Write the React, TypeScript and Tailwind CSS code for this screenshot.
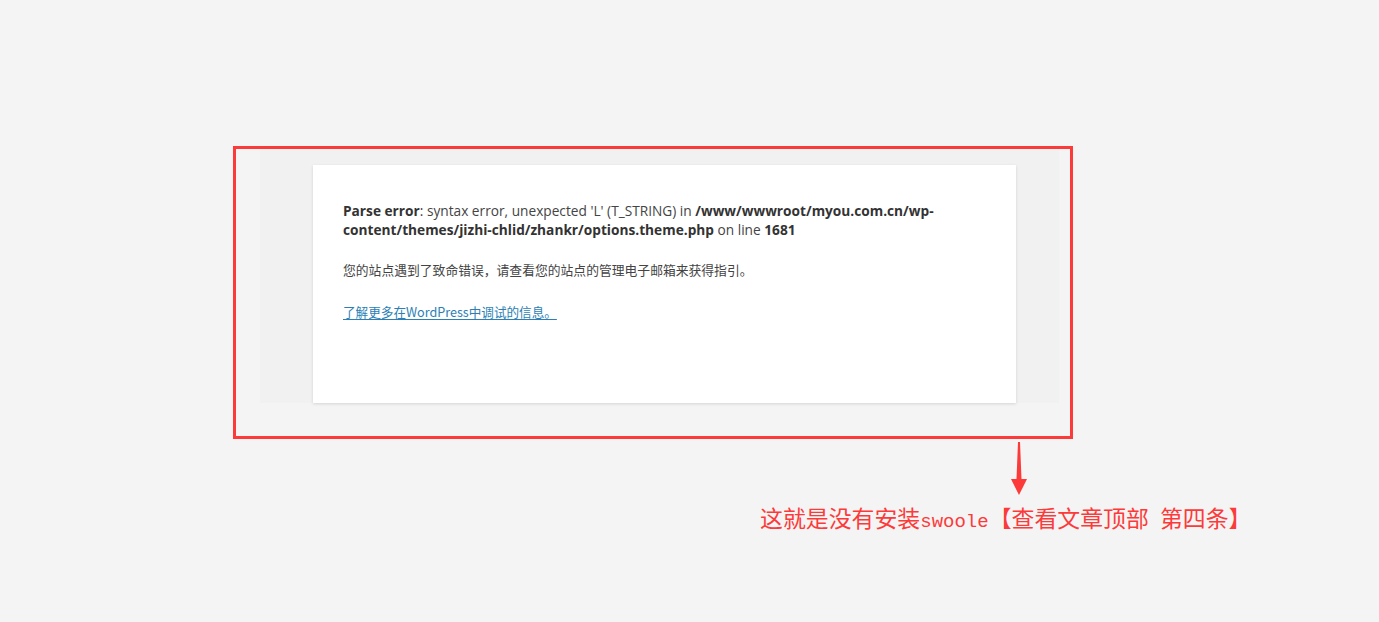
export default function App() {
  return (
    <div className="w-full h-[622px] bg-[#f4f4f4] overflow-hidden pt-[146px] pl-[233px]">
      <div className="w-[840px] h-[293px] border-[3px] border-[#fd3a3a] box-border">
        <div className="ml-[24px] w-[799px] h-[254px] bg-[#f1f1f1] pt-[16px] pl-[53px]">
          <div
            className="w-[703px] h-[238px] bg-white shadow-[0_1px_3px_rgba(0,0,0,0.13)] pl-[30px] pr-[30px] pt-[36px] text-[#444]"
            style={{ fontFamily: '"Open Sans", "Noto Sans CJK SC", sans-serif' }}
          >
            <p className="text-[13.7px] leading-[19px]">
              <b className="font-bold text-[#333]">Parse error</b>: syntax error, unexpected 'L' (T_STRING) in{' '}
              <b className="font-bold text-[#333]">/www/wwwroot/myou.com.cn/wp-content/themes/jizhi-chlid/zhankr/options.theme.php</b>{' '}
              on line <b className="font-bold text-[#333]">1681</b>
            </p>
            <p
              className="mt-[22px] text-[12.8px] leading-[18px] text-[#444]"
              style={{ fontFamily: '"Noto Sans CJK SC", sans-serif' }}
            >
              您的站点遇到了致命错误，请查看您的站点的管理电子邮箱来获得指引。
            </p>
            <p className="mt-[24px] text-[12.6px] leading-[18px]">
              <a
                className="text-[#2b7fb5] underline underline-offset-[2px]"
                style={{ fontFamily: '"Noto Sans CJK SC", sans-serif' }}
              >
                了解更多在WordPress中调试的信息。
              </a>
            </p>
          </div>
        </div>
      </div>
      <div className="flex flex-col">
        <div className="ml-[777px] mt-[3px] w-[18px] h-[54px]">
          <svg width="18" height="54" viewBox="0 0 18 54">
            <polygon points="8,0 10,0 11.5,37 17,37 9,53 1,37 6.5,37" fill="#fd3a3a" />
          </svg>
        </div>
        <div
          className="ml-[527px] mt-[8px] text-[22.9px] leading-[26px] text-[#fd3a3a] whitespace-nowrap"
          style={{ fontFamily: '"Noto Sans CJK SC", serif' }}
        >
          这就是没有安装
          <span className="text-[19px]" style={{ fontFamily: '"Liberation Mono", monospace' }}>swoole</span>
          【查看文章顶部<span className="inline-block w-[11px]"></span>第四条】
        </div>
      </div>
    </div>
  );
}
